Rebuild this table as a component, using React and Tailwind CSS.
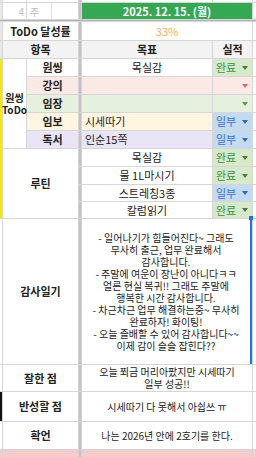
import React from "react";

const font = { fontFamily: '"Noto Sans CJK KR", "Noto Sans", sans-serif' };

function Arrow({ color }) {
  return (
    <svg width="6" height="4" viewBox="0 0 6 4" className="shrink-0">
      <polygon points="0,0 6,0 3,4" fill={color} />
    </svg>
  );
}

function Status({ value, bg }) {
  if (value === "완료") {
    return (
      <div className="bg-[#d6e9c9] flex items-center justify-between pl-[3px] pr-[4px] text-[11px] text-[#3f8f3f]">
        <span>완료</span>
        <Arrow color="#4b7a3c" />
      </div>
    );
  }
  if (value === "일부") {
    return (
      <div className="bg-[#c2dbf3] flex items-center justify-between pl-[3px] pr-[4px] text-[11px] text-[#3b70c8]">
        <span>일부</span>
        <Arrow color="#3d66a8" />
      </div>
    );
  }
  return (
    <div className={`${bg} flex items-center justify-end pr-[4px]`}>
      <Arrow color={value} />
    </div>
  );
}

const Div = () => <div className="bg-[#c2c2c2]" />;
const Edge = ({ cls = "bg-white" }) => <div className={cls} />;

export default function App() {
  const oneThing = [
    { label: "원씽", bg: "bg-white", goal: "목실감", center: true, status: "완료" },
    { label: "강의", bg: "bg-[#fbe9e6]", goal: "", status: "#e06459" },
    { label: "임장", bg: "bg-[#e5f0de]", goal: "", status: "#5f9a4a" },
    { label: "임보", bg: "bg-[#fef6e1]", goal: "시세따기", status: "일부" },
    { label: "독서", bg: "bg-[#e9e5f6]", goal: "인순15쪽", status: "일부" },
  ];
  const routine = [
    ["목실감", "완료"],
    ["물 1L마시기", "완료"],
    ["스트레칭3종", "일부"],
    ["칼럼읽기", "완료"],
  ];
  const gratitude = [
    "- 일어나기가 힘들어진다~ 그래도",
    "무사히 출근, 업무 완료해서",
    "감사합니다.",
    "- 주말에 여운이 장난이 아니다ㅋㅋ",
    "얼른 현실 복귀!! 그래도 주말에",
    "행복한 시간 감사합니다.",
    "- 차근차근 업무 해결하는중~ 무사히",
    "완료하자! 화이팅!",
    "- 오늘 즐배할 수 있어 감사합니다~~",
    "이제 감이 슬슬 잡힌다??",
  ];

  return (
    <div
      style={font}
      className="w-[256px] h-[457px] overflow-hidden bg-white text-[#222]"
    >
      <div className="grid gap-px bg-[#d6d6d6] grid-cols-[2px_23px_51px_2px_130px_39px_3px] grid-rows-[2px_16px_1px_18px_17px_17px_17px_17px_17px_17px_17px_17px_16px_16px_145px_26px_29px_27px_7px]">
        {/* top fragment */}
        <Edge cls="bg-[#e8e8e8]" />
        <Edge />
        <Edge />
        <Div />
        <Edge />
        <Edge />
        <Edge />

        {/* week + date */}
        <Edge cls="bg-[#e8e8e8]" />
        <div className="bg-white flex items-center justify-end pr-[2px] text-[10px] text-[#bdbdbd]">4</div>
        <div className="bg-white flex">
          <div className="w-[25px] border-r border-[#e2e2e2] flex items-center pl-[3px] text-[10px] text-[#bdbdbd]">주</div>
          <div className="flex-1" />
        </div>
        <Div />
        <div className="col-span-2 bg-[#35a853] flex items-center justify-center text-white text-[11px] font-bold">
          2025. 12. 15. (월)
        </div>
        <Edge />

        <div className="col-span-7 bg-[#b4b4b4]" />

        {/* achievement */}
        <Edge cls="bg-[#e8e8e8]" />
        <div className="col-span-2 bg-white flex items-center justify-center text-[11px] font-bold">
          ToDo 달성률
        </div>
        <Div />
        <div className="col-span-2 bg-white flex items-center justify-center text-[11px] text-[#f4b15c]">
          33%
        </div>
        <Edge />

        {/* header */}
        <Edge cls="bg-[#e8e8e8]" />
        <div className="col-span-2 bg-[#f3f3f3] flex items-center justify-center text-[11px] font-bold">
          항목
        </div>
        <Div />
        <div className="bg-[#f3f3f3] flex items-center justify-center text-[11px] font-bold">목표</div>
        <div className="bg-[#f3f3f3] flex items-center justify-center text-[11px] font-bold">실적</div>
        <Edge />

        {/* one thing block */}
        <div className="row-span-9 bg-[#f4e81c]" />
        <div className="row-span-5 bg-white flex flex-col items-center justify-center text-[10px] font-bold leading-[12px] overflow-visible whitespace-nowrap">
          <span>원씽</span>
          <span>ToDo</span>
        </div>
        {oneThing.map((r) => (
          <React.Fragment key={r.label}>
            <div className={`${r.bg} flex items-center justify-center text-[11px] font-bold`}>{r.label}</div>
            <Div />
            <div
              className={`${r.bg} flex items-center text-[11px] ${r.center ? "justify-center" : "justify-start pl-[3px]"}`}
            >
              {r.goal}
            </div>
            <Status value={r.status} bg={r.bg} />
            <Edge />
          </React.Fragment>
        ))}

        {/* routine */}
        <div className="col-span-2 row-span-4 bg-white flex items-center justify-center text-[11px] font-bold">
          루틴
        </div>
        {routine.map(([goal, st]) => (
          <React.Fragment key={goal}>
            <Div />
            <div className="bg-white flex items-center justify-center text-[11px]">{goal}</div>
            <Status value={st} />
            <Edge />
          </React.Fragment>
        ))}

        {/* gratitude */}
        <Edge />
        <div className="col-span-2 bg-white flex items-center justify-center text-[11px] font-bold">
          감사일기
        </div>
        <Div />
        <div className="col-span-2 relative bg-white border-r-2 border-[#1a73e8] flex flex-col items-center justify-center text-center text-[10px]">
          <span className="absolute -top-[3px] -right-[3px] w-[4px] h-[4px] bg-[#1a73e8]" />
          {gratitude.map((line) => (
            <span key={line} className="block h-[12px] leading-[12px] whitespace-nowrap">
              {line}
            </span>
          ))}
        </div>
        <Edge />

        {/* well done */}
        <Edge />
        <div className="col-span-2 bg-white flex items-center justify-center text-[11px] font-bold">
          잘한 점
        </div>
        <Div />
        <div className="col-span-2 bg-white flex flex-col items-center justify-center text-center text-[10px]">
          <span className="block h-[12px] leading-[12px]">오늘 쬐금 머리아팠지만 시세따기</span>
          <span className="block h-[12px] leading-[12px]">일부 성공!!</span>
        </div>
        <Edge />

        {/* reflect */}
        <Edge cls="bg-[#111]" />
        <div className="col-span-2 bg-white flex items-center justify-center text-[11px] font-bold">
          반성할 점
        </div>
        <Div />
        <div className="col-span-2 bg-white flex items-center justify-center text-[10px]">
          시세따기 다 못해서 아쉽쓰 ㅠ
        </div>
        <Edge />

        {/* affirmation */}
        <Edge />
        <div className="col-span-2 bg-white flex items-center justify-center text-[11px] font-bold">
          확언
        </div>
        <Div />
        <div className="col-span-2 bg-white flex items-center justify-center text-[10px]">
          나는 2026년 안에 2호기를 한다.
        </div>
        <Edge />

        {/* bottom */}
        <Edge cls="bg-[#f4cccc]" />
        <div className="col-span-2 bg-[#f4cccc]" />
        <Div />
        <div className="col-span-2 bg-[#f4cccc]" />
        <Edge cls="bg-[#f4cccc]" />
      </div>
    </div>
  );
}
